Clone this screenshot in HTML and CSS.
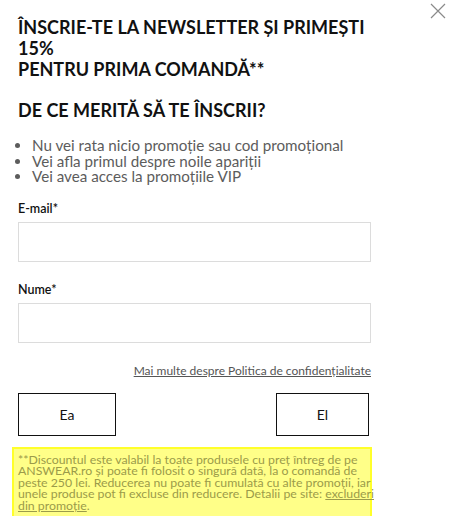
FILE: index.html
```html
<!DOCTYPE html>
<html lang="ro">
<head>
    <meta charset="UTF-8">
    <meta name="viewport" content="width=device-width, initial-scale=1.0">
    <title>Newsletter</title>
    <link rel="stylesheet" href="styles.css">
</head>
<body>
    <div class="popup">
        <button class="close-btn" aria-label="Închide">
            <svg width="16" height="16" viewBox="0 0 16 16">
                <path d="M1 1 L15 15 M15 1 L1 15" stroke="#8a8a8a" stroke-width="1.2" fill="none"/>
            </svg>
        </button>

        <h2 class="title">ÎNSCRIE-TE LA NEWSLETTER ȘI PRIMEȘTI<br>15%<br>PENTRU PRIMA COMANDĂ**</h2>
        <h2 class="title why">DE CE MERITĂ SĂ TE ÎNSCRII?</h2>

        <ul class="benefits">
            <li>Nu vei rata nicio promoție sau cod promoțional</li>
            <li>Vei afla primul despre noile apariții</li>
            <li>Vei avea acces la promoțiile VIP</li>
        </ul>

        <form class="form">
            <label class="field">
                <span class="label">E-mail*</span>
                <input type="email" class="input">
            </label>
            <label class="field">
                <span class="label">Nume*</span>
                <input type="text" class="input">
            </label>

            <div class="privacy">
                <a href="#">Mai multe despre Politica de confidențialitate</a>
            </div>

            <div class="gender">
                <button type="button" class="gender-btn ea">Ea</button>
                <button type="button" class="gender-btn el">El</button>
            </div>
        </form>

        <div class="disclaimer">
            **Discountul este valabil la toate produsele cu preț întreg de pe<br>
            ANSWEAR.ro și poate fi folosit o singură dată, la o comandă de<br>
            peste 250 lei. Reducerea nu poate fi cumulată cu alte promoții, iar<br>
            unele produse pot fi excluse din reducere. Detalii pe site: <a href="#">excluderi<br>
            din promoție</a>.
        </div>
    </div>
</body>
</html>
```
FILE: styles.css
```css
body {
    margin: 0;
    background: #fff;
    color: #111;
    font-family: "Lato", "Open Sans", sans-serif;
}

.popup {
    position: relative;
    width: 353px;
    padding: 0 18px;
}

.close-btn {
    position: absolute;
    top: 3px;
    left: 430px;
    padding: 0;
    border: none;
    background: none;
    cursor: pointer;
}

.title {
    margin: 0;
    padding-top: 17px;
    font-size: 18px;
    line-height: 21px;
    font-weight: 700;
    color: #111;
}

.title.why {
    padding-top: 20px;
}

.benefits {
    margin: 17px 0 0;
    padding-left: 14px;
    font-size: 15.2px;
    line-height: 15.5px;
    color: #5c5c5c;
}

.form {
    margin-top: 16px;
}

.field {
    display: block;
    margin-bottom: 20px;
}

.label {
    display: block;
    margin-bottom: 6px;
    font-size: 12.5px;
    font-weight: 600;
    color: #111;
}

.input {
    display: block;
    box-sizing: border-box;
    width: 353px;
    height: 40px;
    border: 1px solid #dcdcdc;
    background: #fff;
}

.privacy {
    text-align: right;
    font-size: 12px;
}

.privacy a {
    color: #555;
}

.gender {
    display: flex;
    justify-content: space-between;
    margin-top: 15px;
    padding-right: 2px;
}

.gender-btn {
    height: 43px;
    border: 1px solid #111;
    background: #fff;
    font-family: inherit;
    font-size: 14px;
    color: #111;
}

.gender-btn.ea {
    width: 98px;
}

.gender-btn.el {
    width: 93px;
}

.disclaimer {
    margin: 11px 0 0 -6px;
    width: 350px;
    padding: 5px 2px 6px 4px;
    background: #ffff88;
    border: 2px solid #ffff2a;
    font-size: 12.3px;
    line-height: 11.5px;
    white-space: nowrap;
    color: #9b9b4a;
}

.disclaimer a {
    color: #9b9b4a;
}
```
